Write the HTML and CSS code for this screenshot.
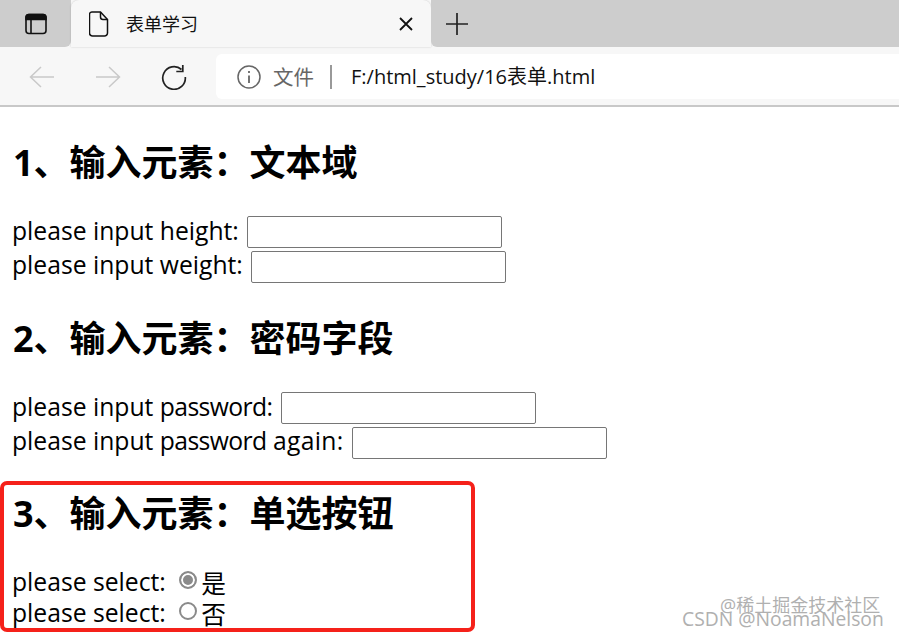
FILE: index.html
```html
<!DOCTYPE html>
<html lang="zh-CN">
<head>
    <meta charset="UTF-8">
    <title>表单学习</title>
    <link rel="stylesheet" href="styles.css">
</head>
<body>
    <!-- Browser tab strip -->
    <div class="tabstrip">
        <div class="tab-side">
            <svg width="24" height="24" viewBox="0 0 24 24" fill="none" stroke="#111" stroke-width="1.6">
                <rect x="2" y="2.5" width="20" height="19" rx="3"/>
                <path d="M2 5.5a3 3 0 0 1 3-3h14a3 3 0 0 1 3 3v2H2z" fill="#111"/>
                <path d="M7 7v14"/>
            </svg>
        </div>
        <div class="tab">
            <svg width="20" height="26" viewBox="0 0 20 26" fill="none" stroke="#111" stroke-width="1.5">
                <path d="M3.500 1h8l7 7.500V22a3 3 0 0 1-3 3h-12a3 3 0 0 1-3-3V3.500a2.500 2.500 0 0 1 3-2.500z"/>
                <path d="M11.500 1v5a2.500 2.500 0 0 0 2.500 2.500h4.500"/>
            </svg>
            <span class="tab-title">表单学习</span>
            <svg class="tab-close" width="14" height="14" viewBox="0 0 14 14" stroke="#111" stroke-width="1.800">
                <path d="M1 1l12 12M13 1L1 13"/>
            </svg>
        </div>
        <div class="tab-rest">
            <svg width="24" height="24" viewBox="0 0 24 24" stroke="#222" stroke-width="1.700">
                <path d="M12 1v22M1 12h22"/>
            </svg>
        </div>
    </div>

    <!-- Toolbar -->
    <div class="toolbar">
        <svg class="nav-icon" width="26" height="24" viewBox="0 0 26 24" fill="none" stroke="#c9c9c9" stroke-width="1.500">
            <path d="M25 12H1M12 2L1.500 12 12 22"/>
        </svg>
        <svg class="nav-icon" width="26" height="24" viewBox="0 0 26 24" fill="none" stroke="#c9c9c9" stroke-width="1.500">
            <path d="M1 12h24M14 2l10.500 10L14 22"/>
        </svg>
        <svg class="nav-icon" width="26" height="26" viewBox="0 0 26 26" fill="none" stroke="#222" stroke-width="1.700">
            <path d="M20.500 5.500A11.300 11.300 0 1 0 24.300 13"/>
            <path d="M21.800 1v6.500h-6.500"/>
        </svg>
        <div class="address">
            <svg width="24" height="24" viewBox="0 0 24 24" fill="none" stroke="#666" stroke-width="1.500">
                <circle cx="12" cy="12" r="11"/>
                <path d="M12 10.500v7.500M12 6v2" stroke-width="1.800"/>
            </svg>
            <span class="scheme">文件</span>
            <span class="divider"></span>
            <span class="url">F:/html_study/16表单.html</span>
        </div>
    </div>

    <!-- Page content -->
    <main class="page">
        <section class="group">
            <h2>1、输入元素：文本域</h2>
            <div class="row"><span>please input height: </span><input type="text"></div>
            <div class="row"><span>please input weight: </span><input type="text"></div>
        </section>
        <section class="group">
            <h2>2、输入元素：密码字段</h2>
            <div class="row"><span>please input <span class="tight">password</span>: </span><input type="password"></div>
            <div class="row"><span>please input <span class="tight">password</span> <span class="loose">again</span>: </span><input type="password"></div>
        </section>
        <section class="group radio-group">
            <h2>3、输入元素：单选按钮</h2>
            <div class="row radio-row"><span>please select: </span><span class="radio checked"></span><span>是</span></div>
            <div class="row radio-row"><span>please select: </span><span class="radio"></span><span>否</span></div>
        </section>
    </main>

    <!-- Annotation and watermarks over the screenshot -->
    <div class="highlight"></div>
    <div class="mark mark-juejin">@稀土掘金技术社区</div>
    <div class="mark mark-csdn">CSDN @NoamaNelson</div>
</body>
</html>
```

FILE: styles.css
```css
/* Basic Reset */
* {
    box-sizing: border-box;
    margin: 0;
    padding: 0;
}

body {
    position: relative;
    width: 899px;
    height: 636px;
    overflow: hidden;
    background: #fff;
    color: #000;
    font-family: "Open Sans", "Noto Sans CJK SC", sans-serif;
}

/* Tab strip */
.tabstrip {
    display: flex;
    height: 47px;
    background: #f7f7f7;
}

.tab-side {
    display: flex;
    align-items: center;
    justify-content: center;
    width: 71px;
    background: #cdcdcd;
    border-radius: 0 0 6px 0;
}

.tab {
    display: flex;
    align-items: center;
    width: 360px;
    padding: 0 18px;
    background: #f7f7f7;
    border-radius: 8px 8px 0 0;
    box-shadow: 0 0 2px rgba(0, 0, 0, 0.2);
}

.tab-title {
    margin: 0 0 2px 17px;
    font-size: 18px;
    color: #111;
}

.tab-close {
    margin-left: auto;
}

.tab-rest {
    display: flex;
    align-items: center;
    flex: 1;
    padding-left: 14px;
    background: #cdcdcd;
    border-radius: 0 0 0 6px;
}

/* Toolbar */
.toolbar {
    display: flex;
    align-items: center;
    height: 60px;
    padding: 1px 0 0 29px;
    background: #f7f7f7;
    border-bottom: 2px solid #c8c8c8;
}

.nav-icon {
    margin-right: 40px;
    flex: none;
}

.nav-icon:nth-child(3) {
    margin-right: 29px;
}

.address {
    display: flex;
    align-items: center;
    flex: 1;
    height: 45px;
    padding-left: 21px;
    background: #fff;
    border-radius: 6px 0 0 6px;
}

.scheme {
    margin: 0 0 2px 12px;
    font-size: 20.500px;
    color: #666;
}

.divider {
    width: 2px;
    height: 24px;
    margin: 0 19px 0 16px;
    background: #999;
}

.url {
    margin-bottom: 2px;
    font-size: 20px;
    color: #111;
}

/* Page content */
.page {
    padding: 0 12px;
}

.group {
    height: 176px;
    padding-top: 33px;
}

.group:nth-child(2) {
    height: 175px;
}

h2 {
    height: 46px;
    margin: 0 0 27px 1px;
    font-size: 36px;
    line-height: 46px;
    font-weight: 700;
}

.row {
    display: flex;
    align-items: center;
    height: 34px;
    font-size: 24.700px;
    white-space: pre;
}

.tight {
    letter-spacing: -0.600px;
}

.loose {
    letter-spacing: 0.300px;
}

.row input {
    width: 255px;
    height: 32px;
    margin: 3px 0 0 2px;
    background: #fff;
    border: 1px solid #767676;
    border-radius: 2px;
}

.row:last-child input {
    margin-top: 5px;
}

/* Radio buttons */
.radio-group h2 {
    margin-bottom: 29px;
}

.radio-row {
    height: 31px;
}

.radio {
    width: 18px;
    height: 18px;
    margin: 0 4px 4px 7px;
    background: #fff;
    border: 2px solid #8a8a8a;
    border-radius: 50%;
}

.radio.checked {
    background: #8a8a8a;
    box-shadow: inset 0 0 0 2px #fff;
}

/* Overlays */
.highlight {
    position: absolute;
    left: 0;
    top: 481px;
    width: 475px;
    height: 151px;
    border: 4px solid #f5211a;
    border-radius: 7px;
}

.mark {
    position: absolute;
    color: #b0b0b0;
    white-space: nowrap;
}

.mark-juejin {
    left: 720px;
    top: 591px;
    font-size: 18px;
}

.mark-csdn {
    left: 682px;
    top: 605px;
    font-size: 19.300px;
}
```
